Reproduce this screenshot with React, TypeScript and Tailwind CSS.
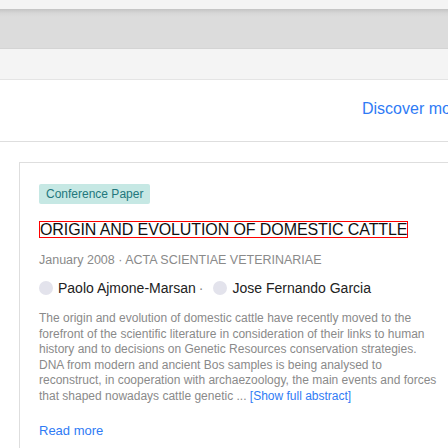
import React from "react";

export default function App() {
  const f = { fontFamily: '"Liberation Sans", Arial, sans-serif' };
  return (
    <div className="w-[448px] h-[448px] overflow-hidden bg-white relative" style={f}>
      <div className="h-[9px] bg-[#f4f4f4]" />
      <div className="h-[40px] bg-[#dcdcdc] bg-[linear-gradient(to_bottom,#c4c4c4_0px,#d6d6d6_4px,#dcdcdc_8px)] border-b border-[#d4d4d4]" />
      <div className="h-[31px] bg-[#f4f4f4] border-b border-[#e4e4e4]" />
      <div className="h-[61px] relative">
        <div className="absolute left-[362px] top-[20px] text-[16px] leading-[18px] text-[#2f7bf5] whitespace-nowrap">Discover more</div>
      </div>
      <div className="h-[21px] border-t border-[#dedede]" />
      <div className="ml-[19px] border-l border-t border-[#dedede] pl-[19px] pt-[18px] pr-[4px]">
        <div className="inline-flex h-[20px] items-center px-[7px] rounded-[2px] bg-[#c6e8e4] text-[#22777c] text-[12px]">Conference Paper</div>
        <div className="mt-[13px]">
          <span className="inline-block border border-[#ff0000] text-[16px] leading-[15px] text-[#111] tracking-[-0.1px]">ORIGIN AND EVOLUTION OF DOMESTIC CATTLE</span>
        </div>
        <div className="mt-[10px] text-[12.5px] leading-[16px] text-[#8a8a8a] whitespace-nowrap">January 2008 · ACTA SCIENTIAE VETERINARIAE</div>
        <div className="mt-[10px] flex items-center h-[20px] text-[14px] text-[#222] whitespace-nowrap">
          <span className="w-[14px] h-[14px] rounded-full bg-[#e3e3ec]" />
          <span className="ml-[5px]">Paolo Ajmone-Marsan</span>
          <span className="text-[#888] ml-[3px]">·</span>
          <span className="ml-[10px] w-[14px] h-[14px] rounded-full bg-[#e3e3ec]" />
          <span className="ml-[5px]">Jose Fernando Garcia</span>
        </div>
        <div className="mt-[13px] text-[12px] leading-[15.6px] text-[#8a8a8a] w-[400px]">
          <div className="whitespace-nowrap">The origin and evolution of domestic cattle have recently moved to the</div>
          <div className="whitespace-nowrap">forefront of the scientific literature in consideration of their links to human</div>
          <div className="whitespace-nowrap">history and to decisions on Genetic Resources conservation strategies.</div>
          <div className="whitespace-nowrap">DNA from modern and ancient Bos samples is being analysed to</div>
          <div className="whitespace-nowrap">reconstruct, in cooperation with archaezoology, the main events and forces</div>
          <div className="whitespace-nowrap">that shaped nowadays cattle genetic ... <span className="text-[#2f7bf5]">[Show full abstract]</span></div>
        </div>
        <div className="mt-[18px] text-[13px] leading-[16px] text-[#2f7bf5] pb-[40px]">Read more</div>
      </div>
    </div>
  );
}
